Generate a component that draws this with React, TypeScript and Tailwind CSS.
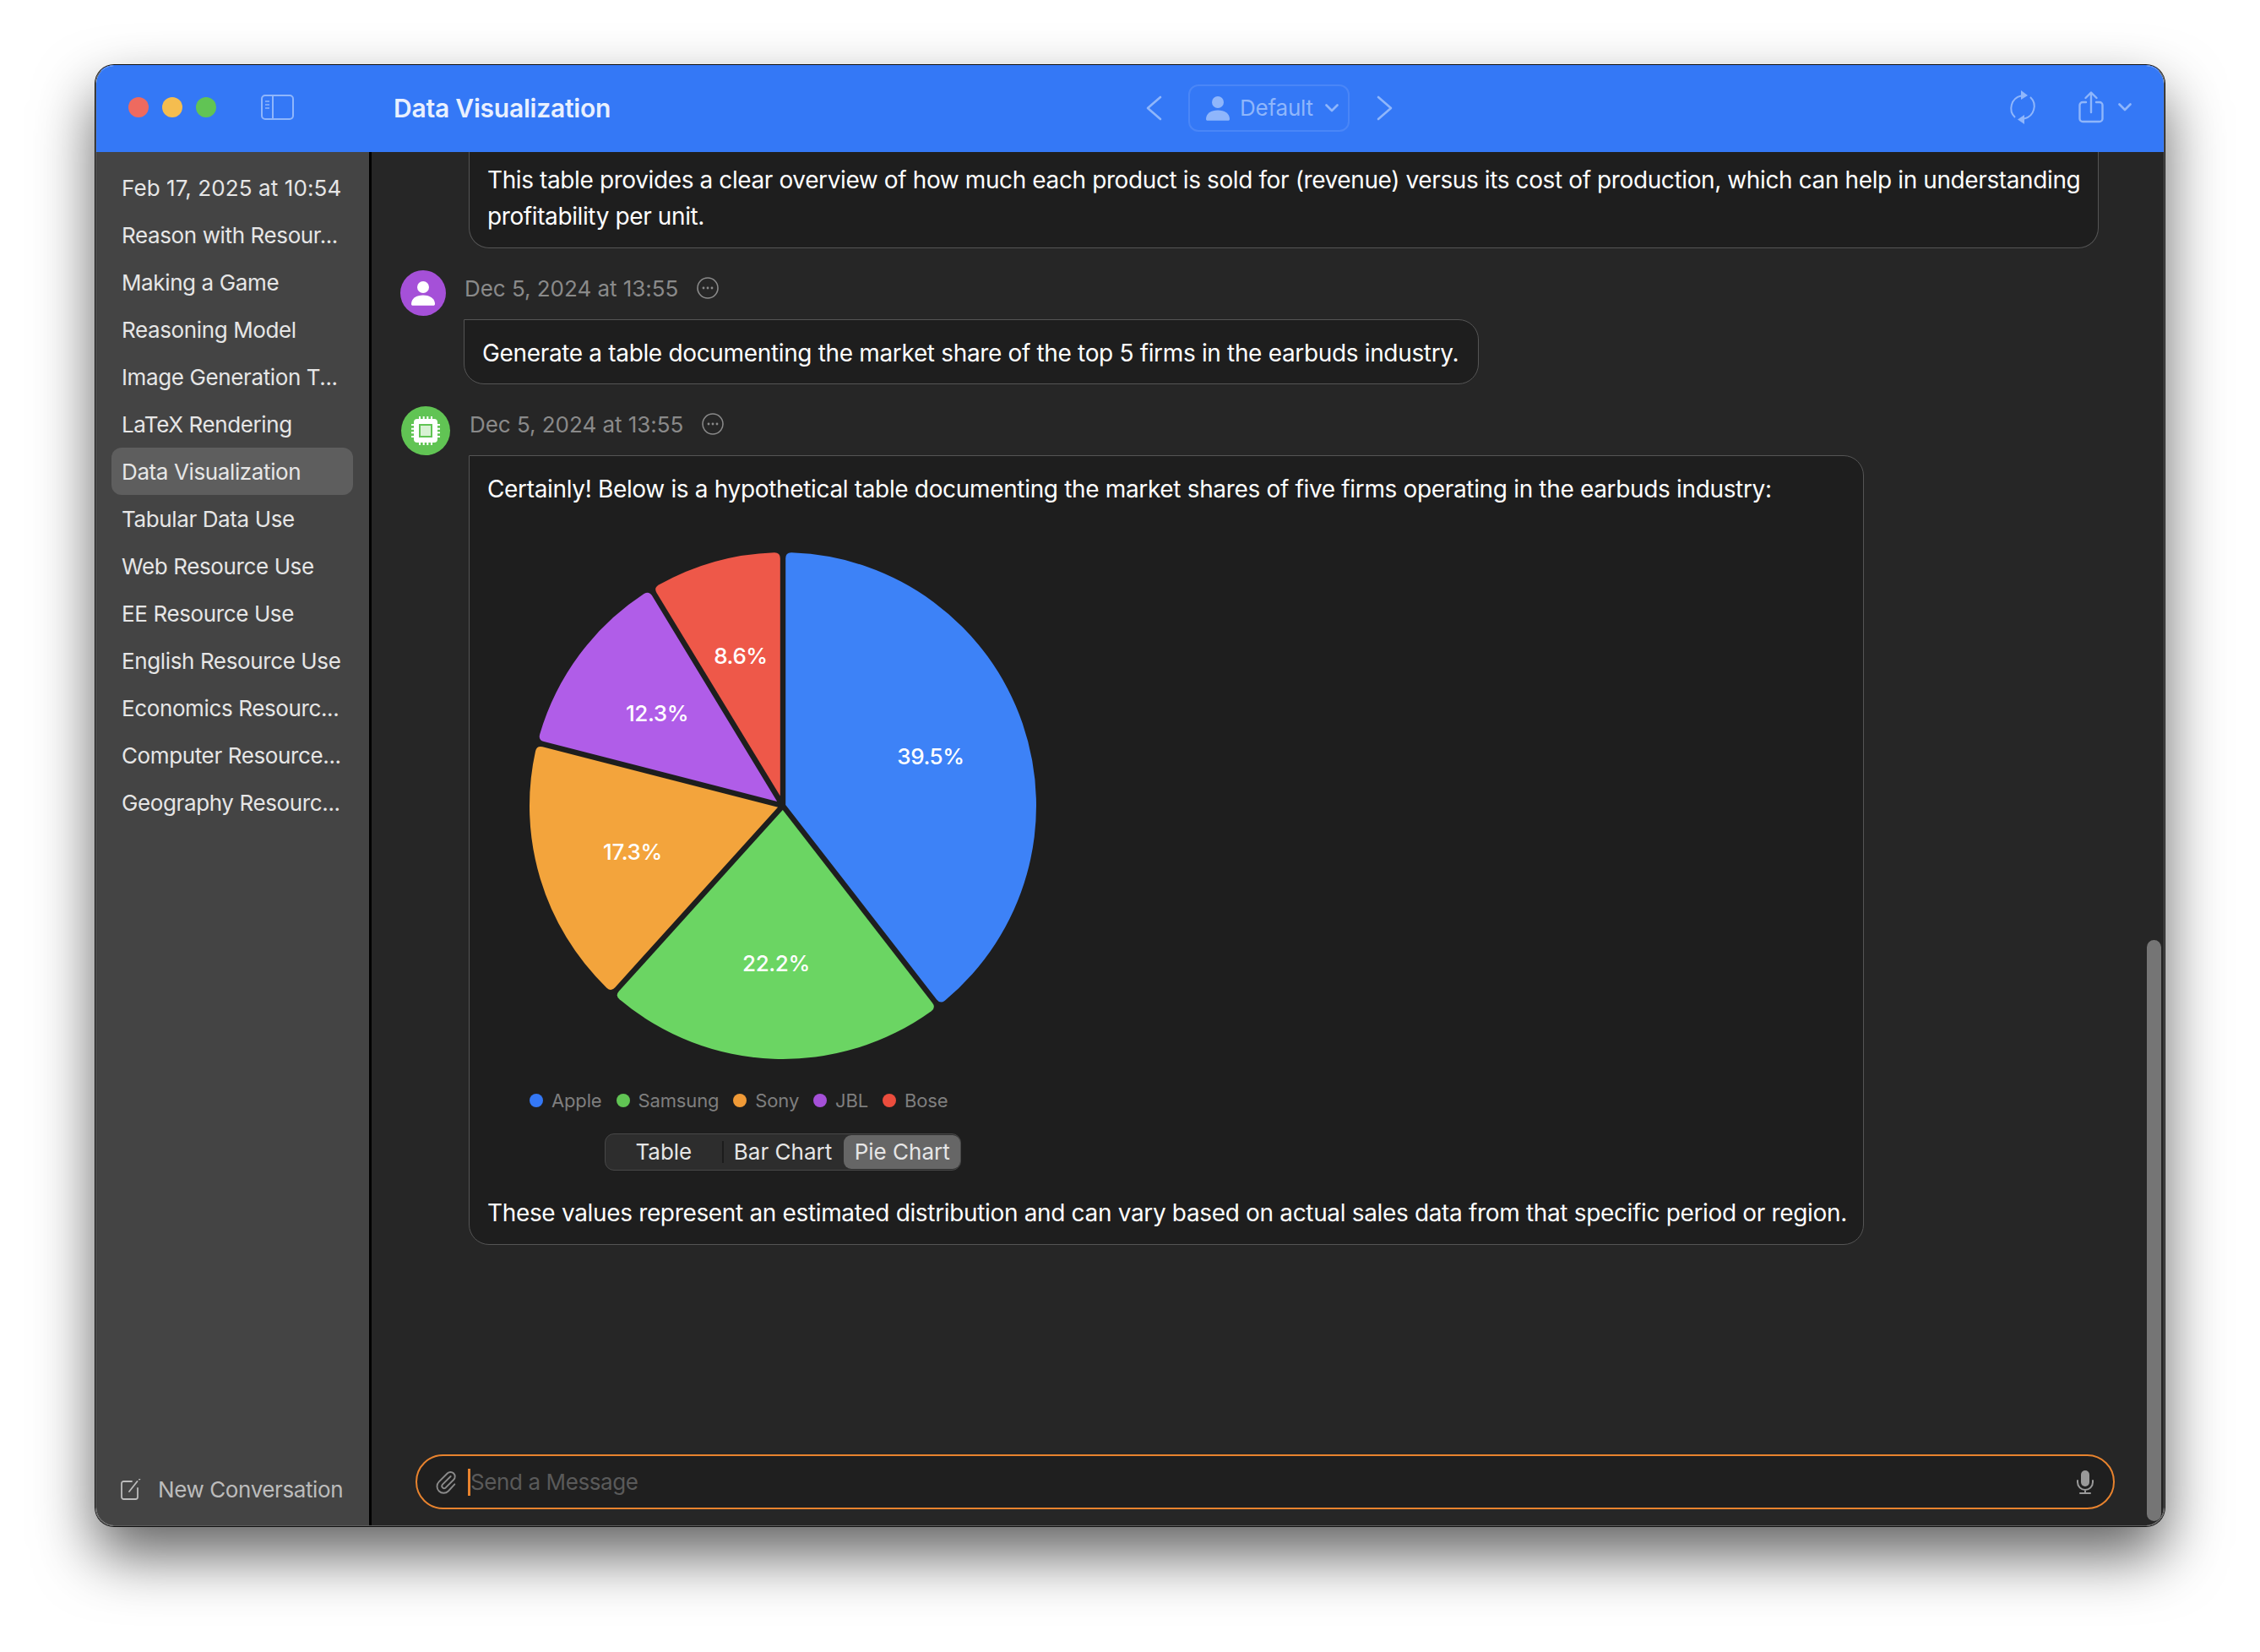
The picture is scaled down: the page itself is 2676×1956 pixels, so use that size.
import React from 'react';

const font = { fontFamily: 'Inter, "Noto Sans", sans-serif' };

const chats = [
  'Feb 17, 2025 at 10:54',
  'Reason with Resour...',
  'Making a Game',
  'Reasoning Model',
  'Image Generation T...',
  'LaTeX Rendering',
  'Data Visualization',
  'Tabular Data Use',
  'Web Resource Use',
  'EE Resource Use',
  'English Resource Use',
  'Economics Resourc...',
  'Computer Resource...',
  'Geography Resourc...',
];

const slices = [
  { name: 'Apple', value: 39.5, from: 0, to: 142.2, color: '#3d82f7', legend: '#3478f6', x: 476, y: 243 },
  { name: 'Samsung', value: 22.2, from: 142.2, to: 222.1, color: '#6bd563', legend: '#61c454', x: 293, y: 488 },
  { name: 'Sony', value: 17.3, from: 222.1, to: 284.4, color: '#f3a43c', legend: '#f09a37', x: 123, y: 356 },
  { name: 'JBL', value: 12.3, from: 284.4, to: 328.7, color: '#b05de8', legend: '#a550d8', x: 152, y: 192 },
  { name: 'Bose', value: 8.6, from: 328.7, to: 360, color: '#ee5849', legend: '#eb4d3d', x: 251, y: 124 },
];

const polar = (r: number, deg: number) => {
  const a = (deg * Math.PI) / 180;
  return `${301 + r * Math.sin(a)} ${301 - r * Math.cos(a)}`;
};

const deg = (rad: number) => (rad * 180) / Math.PI;

// sharp at the centre, small rounded corners where the sides meet the rim
function wedge(from: number, to: number) {
  const gap = 3.2;
  const corner = 7;
  const R = 300;
  const half = (to - from) / 2;
  const apex = polar(gap / Math.sin((half * Math.PI) / 180), from + half);
  const edge = deg(Math.asin(gap / R));
  const inner = deg(Math.asin(gap / (R - corner)));
  const bend = deg(corner / R);
  const large = to - from - 2 * (edge + bend) > 180 ? 1 : 0;
  return [
    `M${apex}`,
    `L${polar(R - corner, from + inner)}`,
    `Q${polar(R, from + edge)} ${polar(R, from + edge + bend)}`,
    `A${R} ${R} 0 ${large} 1 ${polar(R, to - edge - bend)}`,
    `Q${polar(R, to - edge)} ${polar(R - corner, to - inner)}`,
    'Z',
  ].join('');
}

const Person = ({ className }: { className: string }) => (
  <svg viewBox="0 0 28 30" className={className} fill="currentColor">
    <circle cx="14" cy="8" r="7" />
    <path d="M0 28c0-6.500 6-10.500 14-10.500S28 21.500 28 28c0 1-.7 1.800-1.800 1.800H1.800C.7 29.800 0 29 0 28z" />
  </svg>
);

const Chevron = ({ className }: { className: string }) => (
  <svg viewBox="0 0 16 10" className={className} fill="none" stroke="currentColor" strokeWidth="2.600" strokeLinecap="round" strokeLinejoin="round">
    <path d="M1.500 1.500 8 8l6.500-6.500" />
  </svg>
);

const MoreCircle = () => (
  <svg viewBox="0 0 26 26" className="w-[26px] h-[26px] text-[#8a8a8a]" fill="none" stroke="currentColor" strokeWidth="1.600">
    <circle cx="13" cy="13" r="12" />
    <circle cx="8" cy="13" r="1.400" fill="currentColor" stroke="none" />
    <circle cx="13" cy="13" r="1.400" fill="currentColor" stroke="none" />
    <circle cx="18" cy="13" r="1.400" fill="currentColor" stroke="none" />
  </svg>
);

const Chip = () => (
  <svg viewBox="0 0 34 34" className="w-[34px] h-[34px]">
    <g stroke="#fff" strokeWidth="2">
      <path d="M10 0v5M14.700 0v5M19.300 0v5M24 0v5M10 29v5M14.700 29v5M19.300 29v5M24 29v5M0 10h5M0 14.700h5M0 19.300h5M0 24h5M29 10h5M29 14.700h5M29 19.300h5M29 24h5" />
    </g>
    <rect x="3" y="3" width="28" height="28" rx="4" fill="#fff" />
    <rect x="9" y="9" width="16" height="16" fill="#61c454" />
    <rect x="11" y="11" width="12" height="12" fill="#d8f2d4" />
  </svg>
);

export default function App() {
  return (
    <div className="w-[2676px] h-[1956px] overflow-hidden bg-white pl-[113px] pt-[77px]" style={font}>
      <div className="w-[2450px] h-[1730px] rounded-[22px] overflow-hidden flex flex-col border border-[#5c5c5c] border-t-[#3478f6] shadow-[0_0_0_1px_#111,0_34px_70px_rgba(0,0,0,0.62)]">
        {/* Title bar */}
        <header className="h-[102px] shrink-0 bg-[#3478f6] flex items-center relative text-[#8fb6fb] pb-[4px]">
          <div className="flex items-center gap-[16px] pl-[38px]">
            <span className="w-[24px] h-[24px] rounded-full bg-[#ee6a5f]" />
            <span className="w-[24px] h-[24px] rounded-full bg-[#f5bd4f]" />
            <span className="w-[24px] h-[24px] rounded-full bg-[#61c454]" />
          </div>
          <svg viewBox="0 0 39 30" className="w-[39px] h-[30px] ml-[53px]" fill="none" stroke="currentColor" strokeWidth="2">
            <rect x="1" y="1" width="37" height="28" rx="4" />
            <path d="M14 1v28" />
            <path d="M5 8h5M5 12h5M5 16h5" strokeWidth="1.500" />
          </svg>
          <h1 className="ml-[118px] mt-[2px] text-[30px] font-semibold text-[#e9f0fe] tracking-[-0.22px]">Data Visualization</h1>
          <div className="absolute left-[1242px] top-[22px] flex items-center">
            <svg viewBox="0 0 20 30" className="w-[20px] h-[30px]" fill="none" stroke="currentColor" strokeWidth="2.600" strokeLinecap="round" strokeLinejoin="round">
              <path d="M18 2 3 15l15 13" />
            </svg>
            <div className="ml-[31px] w-[191px] h-[56px] rounded-[12px] border-2 border-[#4a86f7] flex items-center pl-[19px]">
              <Person className="w-[28px] h-[30px]" />
              <span className="ml-[12px] -mt-[2px] text-[26px] tracking-[-0.2px]">Default</span>
              <Chevron className="w-[16px] h-[10px] ml-[14px]" />
            </div>
            <svg viewBox="0 0 20 30" className="w-[20px] h-[30px] ml-[32px]" fill="none" stroke="currentColor" strokeWidth="2.600" strokeLinecap="round" strokeLinejoin="round">
              <path d="m2 2 15 13L2 28" />
            </svg>
          </div>
          <div className="ml-auto flex items-center pr-[38px]">
            <svg viewBox="0 0 34 40" className="w-[34px] h-[40px]" fill="none" stroke="currentColor" strokeWidth="2">
              <path d="M15 6.500A15 15 0 0 0 8 32" />
              <path d="M19 33.500A15 15 0 0 0 26 8" />
              <path d="M15 0l8 6-8 5z" fill="currentColor" stroke="none" />
              <path d="M19 29l-8 5.500 8 5.500z" fill="currentColor" stroke="none" />
            </svg>
            <svg viewBox="0 0 30 38" className="w-[30px] h-[38px] ml-[49px]" fill="none" stroke="currentColor" strokeWidth="2.400" strokeLinecap="round" strokeLinejoin="round">
              <path d="M9 13H5a3.500 3.500 0 0 0-3.500 3.500v16A3.500 3.500 0 0 0 5 36h20a3.500 3.500 0 0 0 3.500-3.500v-16A3.500 3.500 0 0 0 25 13h-4" />
              <path d="M15 25V2M8.500 8 15 1.500 21.500 8" />
            </svg>
            <Chevron className="w-[16px] h-[10px] ml-[17px]" />
          </div>
        </header>

        <div className="flex-1 flex min-h-0">
          {/* Sidebar */}
          <aside className="w-[326px] shrink-0 bg-[#444444] border-r-[3px] border-black flex flex-col pt-[14px] pl-[18px] pr-[19px] pb-[23px]">
            {chats.map((chat, i) => (
              <div
                key={chat}
                className={`h-[56px] shrink-0 flex items-center pl-[12px] rounded-[12px] text-[26px] whitespace-nowrap text-[#e6e6e6] ${i === 0 ? 'tracking-[0.1px]' : 'tracking-[-0.38px]'} ${chat === 'Data Visualization' ? 'bg-[#5e5e5e]' : ''}`}
              >
                {chat}
              </div>
            ))}
            <div className="mt-auto flex items-center pl-[11px] text-[#bcbcbc]">
              <svg viewBox="0 0 24 25" className="w-[24px] h-[25px]" fill="none" stroke="currentColor" strokeWidth="1.800" strokeLinecap="round">
                <path d="M13 3H3.500A2.500 2.500 0 0 0 1 5.500v16A2.500 2.500 0 0 0 3.500 24h14a2.500 2.500 0 0 0 2.500-2.500V11" />
                <path d="M10 15 19.500 3M22 .500l.5-.5" />
              </svg>
              <span className="ml-[20px] text-[26px] tracking-[-0.4px] whitespace-nowrap">New Conversation</span>
            </div>
          </aside>

          {/* Conversation */}
          <main className="flex-1 relative bg-[#262626] flex flex-col min-w-0 text-white">
            <div className="flex-1 min-h-0 overflow-hidden text-[28px] leading-[43px] tracking-[-0.34px]">
              <div className="ml-[115px] mr-[77px] bg-[#1e1e1e] border border-t-0 border-[#555555] rounded-b-[24px] pt-[12px] pb-[15px] pl-[21px] pr-[8px] tracking-[-0.39px]">
                This table provides a clear overview of how much each product is sold for (revenue) versus its cost of production, which can help in understanding profitability per unit.
              </div>

              <div className="flex mt-[26px] pl-[34px]">
                <div className="w-[54px] h-[54px] rounded-full bg-[#a550d8] flex items-center justify-center shrink-0">
                  <Person className="w-[28px] h-[30px] text-white" />
                </div>
                <div className="ml-[21px]">
                  <div className="h-[42px] flex items-center pl-[1px] text-[#8a8a8a] text-[26px] tracking-[-0.03px]">
                    <span>Dec 5, 2024 at 13:55</span>
                    <span className="ml-[22px]"><MoreCircle /></span>
                  </div>
                  <div className="w-[1202px] mt-[16px] bg-[#1e1e1e] border border-[#555555] rounded-[24px] rounded-tl-none pt-[18px] pb-[14px] px-[21px] whitespace-nowrap">
                    Generate a table documenting the market share of the top 5 firms in the earbuds industry.
                  </div>
                </div>
              </div>

              <div className="flex mt-[26px] pl-[35px]">
                <div className="w-[58px] h-[58px] rounded-full bg-[#61c454] flex items-center justify-center shrink-0">
                  <Chip />
                </div>
                <div className="ml-[22px]">
                  <div className="h-[42px] flex items-center pl-[1px] text-[#8a8a8a] text-[26px] tracking-[-0.03px]">
                    <span>Dec 5, 2024 at 13:55</span>
                    <span className="ml-[22px]"><MoreCircle /></span>
                  </div>
                  <div className="w-[1652px] mt-[16px] bg-[#1e1e1e] border border-[#555555] rounded-[24px] rounded-tl-none pt-[18px] pb-[15px] px-[21px]">
                    <p className="whitespace-nowrap">Certainly! Below is a hypothetical table documenting the market shares of five firms operating in the earbuds industry:</p>

                    <svg viewBox="0 0 602 602" className="block w-[602px] h-[602px] ml-[49px] mt-[52px]">
                      {slices.map(s => (
                        <path key={s.name} d={wedge(s.from, s.to)} fill={s.color} />
                      ))}
                      {slices.map(s => (
                        <text key={s.name} x={s.x} y={s.y + 9} textAnchor="middle" fill="#fff" fontSize="26" fontWeight="500" letterSpacing="-0.4">
                          {s.value}%
                        </text>
                      ))}
                    </svg>

                    <div className="flex items-center gap-[17px] ml-[50px] mt-[35px] h-[26px] text-[22px] tracking-[-0.15px] text-[#7f7f7f]">
                      {slices.map(s => (
                        <div key={s.name} className="flex items-center gap-[10px]">
                          <span className="w-[16px] h-[16px] rounded-full" style={{ backgroundColor: s.legend }} />
                          <span>{s.name}</span>
                        </div>
                      ))}
                    </div>

                    <div className="w-[422px] h-[44px] ml-[139px] mt-[26px] rounded-[11px] bg-[#2d2d2d] border border-[#484848] flex items-center text-[26px] tracking-[0px] leading-none text-[#e6e6e6]">
                      <span className="w-[138px] text-center">Table</span>
                      <span className="w-[2px] h-[26px] bg-[#1c1c1c]" />
                      <span className="w-[141px] mr-[2px] text-center whitespace-nowrap">Bar Chart</span>
                      <span className="w-[138px] h-[40px] rounded-[9px] bg-[#666666] flex items-center justify-center whitespace-nowrap">Pie Chart</span>
                    </div>

                    <p className="mt-[29px] whitespace-nowrap">These values represent an estimated distribution and can vary based on actual sales data from that specific period or region.</p>
                  </div>
                </div>
              </div>
            </div>

            {/* Input */}
            <div className="pl-[52px] pr-[58px] pb-[19px]">
              <div className="h-[65px] rounded-full border-2 border-[#e8832e] bg-[#1f1f1f] flex items-center pl-[21px] pr-[23px]">
                <svg viewBox="0 0 24 24" className="w-[28px] h-[28px] text-[#8a8a8a]" fill="none" stroke="currentColor" strokeWidth="1.600" strokeLinecap="round" strokeLinejoin="round">
                  <path d="m16 6-8.500 8.500a2.300 2.300 0 0 0 3.200 3.200l8.300-8.300a4.500 4.500 0 0 0-6.400-6.400l-8.500 8.500a6.700 6.700 0 0 0 9.500 9.500L20 14" />
                </svg>
                <span className="ml-[11px] w-[3px] h-[32px] bg-[#e8832e] shrink-0" />
                <span className="text-[26px] tracking-[-0.4px] text-[#5a5a5a]">Send a Message</span>
                <svg viewBox="0 0 20 28" className="ml-auto w-[20px] h-[28px] text-[#999999]" fill="none" stroke="currentColor" strokeWidth="2" strokeLinecap="round">
                  <rect x="5" y="0" width="10" height="19" rx="5" fill="currentColor" stroke="none" />
                  <path d="M1 12v2a9 9 0 0 0 18 0v-2M10 23v4M4 27h12" />
                </svg>
              </div>
            </div>

            {/* Overlay scrollbar */}
            <div className="absolute right-[3px] bottom-[5px] w-[17px] h-[688px] rounded-full bg-[#757575]" />
          </main>
        </div>
      </div>
    </div>
  );
}
